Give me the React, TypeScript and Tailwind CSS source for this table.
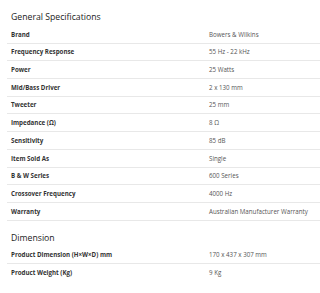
import React from 'react';

const GENERAL: [string, string][] = [
  ['Brand', 'Bowers & Wilkins'],
  ['Frequency Response', '55 Hz - 22 kHz'],
  ['Power', '25 Watts'],
  ['Mid/Bass Driver', '2 x 130 mm'],
  ['Tweeter', '25 mm'],
  ['Impedance (Ω)', '8 Ω'],
  ['Sensitivity', '85 dB'],
  ['Item Sold As', 'Single'],
  ['B & W Series', '600 Series'],
  ['Crossover Frequency', '4000 Hz'],
  ['Warranty', 'Australian Manufacturer Warranty'],
];

const DIMENSION: [string, string][] = [
  ['Product Dimension (H×W×D) mm', '170 x 437 x 307 mm'],
  ['Product Weight (Kg)', '9 Kg'],
];

const SpecRow = ({ label, value, last }: { label: string; value: string; last?: boolean }) => (
  <div className={`flex h-[17.7px] items-center ${last ? '' : 'border-b border-[#e8e8e8]'}`}>
    <div className="w-[202px] shrink-0 pl-[4px] text-[6.2px] font-bold text-[#333]">{label}</div>
    <div className="text-[6.2px] text-[#555]">{value}</div>
  </div>
);

const Section = ({ title, rows, lastLine }: { title: string; rows: [string, string][]; lastLine: boolean }) => (
  <div>
    <h2 className="pl-[4px] pt-[11px] mb-[3px] text-[8.7px] leading-[12px] font-medium text-[#222]">{title}</h2>
    {rows.map(([l, v], i) => (
      <SpecRow key={l} label={l} value={v} last={!lastLine && i === rows.length - 1} />
    ))}
  </div>
);

export default function App() {
  return (
    <div className="h-[293px] w-[320px] overflow-hidden bg-white pl-[7px] font-['Open_Sans',sans-serif]">
      <Section title="General Specifications" rows={GENERAL} lastLine />
      <Section title="Dimension" rows={DIMENSION} lastLine={false} />
    </div>
  );
}
